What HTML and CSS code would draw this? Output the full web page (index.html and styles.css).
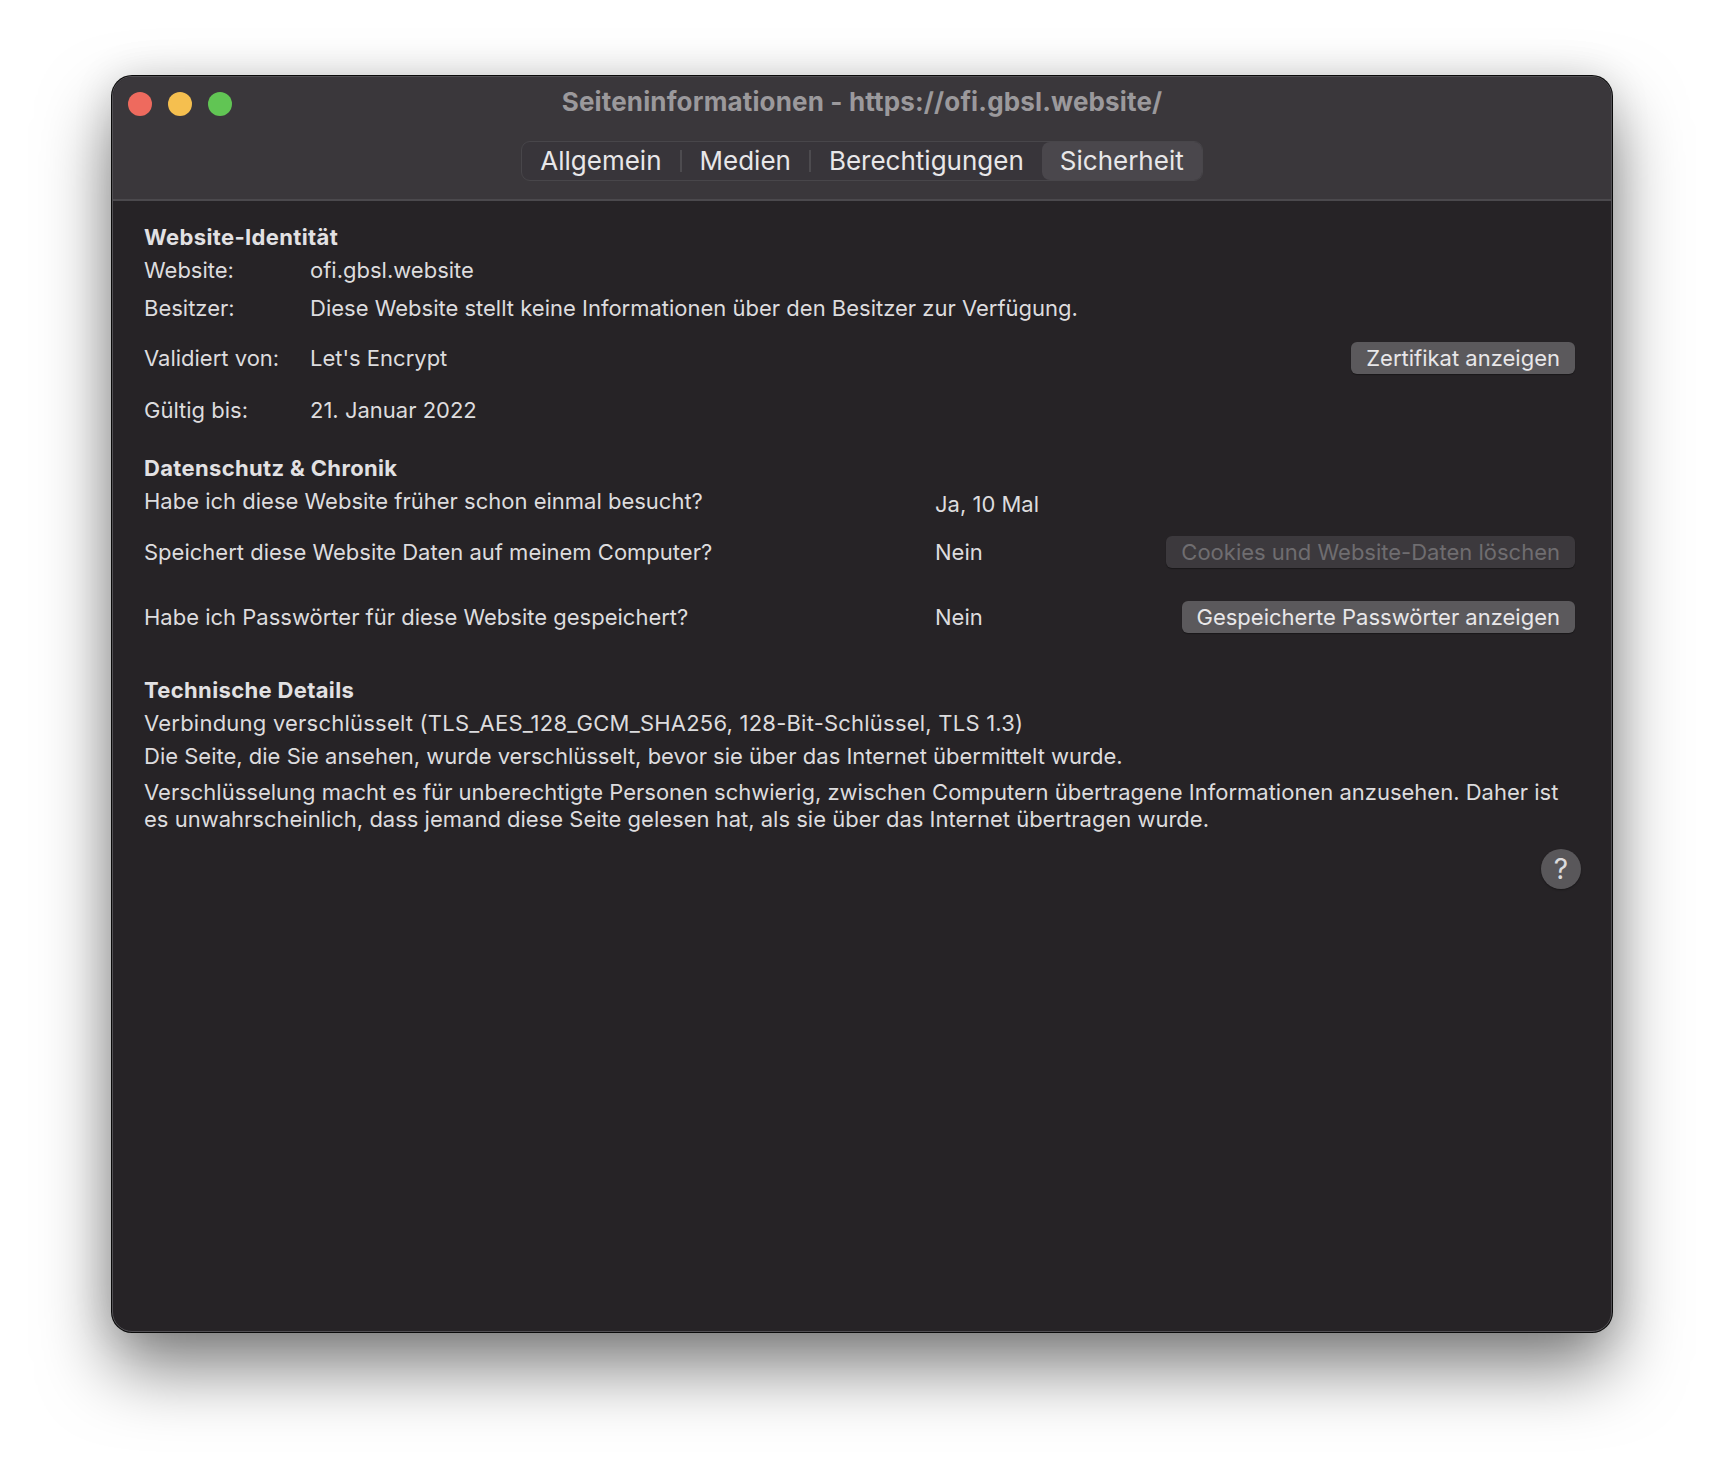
FILE: index.html
```html
<!DOCTYPE html>
<html lang="de">
<head>
<meta charset="utf-8">
<title>Seiteninformationen</title>
<link rel="stylesheet" href="styles.css">
</head>
<body>
<div class="window">
  <header class="titlebar">
    <div class="titlerow">
      <div class="lights">
        <span class="light red"></span>
        <span class="light yellow"></span>
        <span class="light green"></span>
      </div>
      <div class="title">Seiteninformationen - https://ofi.gbsl.website/</div>
      <div></div>
    </div>
    <div class="tabs-row">
      <div class="segmented">
        <div class="seg">Allgemein</div>
        <div class="sep"></div>
        <div class="seg">Medien</div>
        <div class="sep"></div>
        <div class="seg">Berechtigungen</div>
        <div class="seg selected">Sicherheit</div>
      </div>
    </div>
  </header>
  <main class="content">
    <div class="sec-title">Website-Identität</div>
    <div class="row mt3"><span class="label">Website:</span><span>ofi.gbsl.website</span></div>
    <div class="row mt8"><span class="label">Besitzer:</span><span>Diese Website stellt keine Informationen über den Besitzer zur Verfügung.</span></div>
    <div class="row btnrow mt19"><span class="label">Validiert von:</span><span>Let's Encrypt</span><button class="btn">Zertifikat anzeigen</button></div>
    <div class="row mt21"><span class="label">Gültig bis:</span><span>21. Januar 2022</span></div>

    <div class="sec-title mt28">Datenschutz &amp; Chronik</div>
    <div class="row mt3"><span class="question">Habe ich diese Website früher schon einmal besucht?</span><span class="value-low">Ja, 10 Mal</span></div>
    <div class="row btnrow mt20"><span class="question">Speichert diese Website Daten auf meinem Computer?</span><span>Nein</span><button class="btn disabled">Cookies und Website-Daten löschen</button></div>
    <div class="row btnrow mt33"><span class="question">Habe ich Passwörter für diese Website gespeichert?</span><span>Nein</span><button class="btn">Gespeicherte Passwörter anzeigen</button></div>

    <div class="sec-title mt42">Technische Details</div>
    <div class="row mt3 cipher">Verbindung verschlüsselt (TLS_AES_128_GCM_SHA256, 128-Bit-Schlüssel, TLS 1.3)</div>
    <div class="row mt3">Die Seite, die Sie ansehen, wurde verschlüsselt, bevor sie über das Internet übermittelt wurde.</div>
    <p class="para">Verschlüsselung macht es für unberechtigte Personen schwierig, zwischen Computern übertragene Informationen anzusehen. Daher ist es unwahrscheinlich, dass jemand diese Seite gelesen hat, als sie über das Internet übertragen wurde.</p>
    <div class="help-row"><div class="help">?</div></div>
  </main>
</div>
</body>
</html>
```
FILE: styles.css
```css
html, body {
  margin: 0;
  padding: 0;
}
body {
  background: #ffffff;
  font-family: Inter, "Noto Sans", sans-serif;
  width: 1724px;
  height: 1480px;
  padding: 76px 0 0 112px;
  box-sizing: border-box;
  overflow: hidden;
}
.window {
  width: 1500px;
  height: 1256px;
  box-sizing: border-box;
  border: 1px solid #525054;
  border-radius: 20px;
  background: #262326;
  box-shadow: 0 0 0 1px #0a0a0a, 0 36px 70px rgba(0, 0, 0, 0.5), 0 0 40px rgba(0, 0, 0, 0.12);
  overflow: hidden;
  display: flex;
  flex-direction: column;
}
.titlebar {
  background: #3a373b;
  border-bottom: 2px solid #4b494d;
  padding: 9px 0 18px;
}
.titlerow {
  display: grid;
  grid-template-columns: 1fr auto 1fr;
  align-items: center;
  height: 32px;
}
.lights {
  display: flex;
  gap: 16px;
  padding-left: 15px;
  margin-top: 4px;
}
.light {
  width: 24px;
  height: 24px;
  border-radius: 50%;
}
.red { background: #ee6a5e; }
.yellow { background: #f5bf4f; }
.green { background: #61c554; }
.title {
  font-size: 26px;
  font-weight: 700;
  color: #9b999c;
  line-height: 32px;
  letter-spacing: 0.15px;
  white-space: nowrap;
}
.tabs-row {
  display: flex;
  justify-content: center;
  margin-top: 23px;
}
.segmented {
  display: flex;
  align-items: center;
  height: 40px;
  box-sizing: border-box;
  border: 1px solid #48464a;
  border-radius: 9px;
  background: #38353a;
}
.seg {
  padding: 0 18px;
  font-size: 26px;
  color: #e8e7e9;
  line-height: 38px;
  white-space: nowrap;
}
.seg.selected {
  background: #4a474c;
  border-radius: 8px;
}
.sep {
  width: 2px;
  height: 22px;
  background: #4d4b4f;
}
.content {
  flex: 1;
  padding: 21px 36px 0 31px;
  color: #dddcde;
  font-size: 22px;
}
.sec-title {
  height: 30px;
  line-height: 30px;
  font-weight: 700;
  color: #e2e1e3;
  letter-spacing: 0.35px;
}
.row {
  display: flex;
  align-items: center;
  height: 30px;
  white-space: nowrap;
}
.row.btnrow {
  height: 32px;
}
.cipher {
  letter-spacing: 0.22px;
}
.label {
  width: 166px;
  flex: none;
}
.question {
  width: 791px;
  flex: none;
}
.value-low {
  padding-top: 6px;
}
.btn {
  margin-left: auto;
  height: 32px;
  padding: 0 15px;
  border: none;
  border-radius: 6px;
  background: #5b595c;
  color: #e8e7e9;
  font-family: inherit;
  font-size: 22px;
  line-height: 32px;
  box-shadow: 0 1px 1px rgba(0, 0, 0, 0.35);
}
.btn.disabled {
  background: #3c393d;
  color: #6f6d70;
}
.mt3 { margin-top: 3px; }
.mt8 { margin-top: 8px; }
.mt19 { margin-top: 19px; }
.mt20 { margin-top: 20px; }
.mt21 { margin-top: 21px; }
.mt28 { margin-top: 28px; }
.mt33 { margin-top: 33px; }
.mt42 { margin-top: 42px; }
.para {
  margin: 8px 0 0;
  line-height: 27px;
}
.help-row {
  display: flex;
  justify-content: flex-end;
  margin: 16px -6px 0 0;
}
.help {
  width: 40px;
  height: 40px;
  border-radius: 50%;
  background: #59575a;
  color: #dcdbdd;
  font-size: 28px;
  display: flex;
  align-items: center;
  justify-content: center;
  box-shadow: 0 1px 2px rgba(0, 0, 0, 0.35);
}
```
